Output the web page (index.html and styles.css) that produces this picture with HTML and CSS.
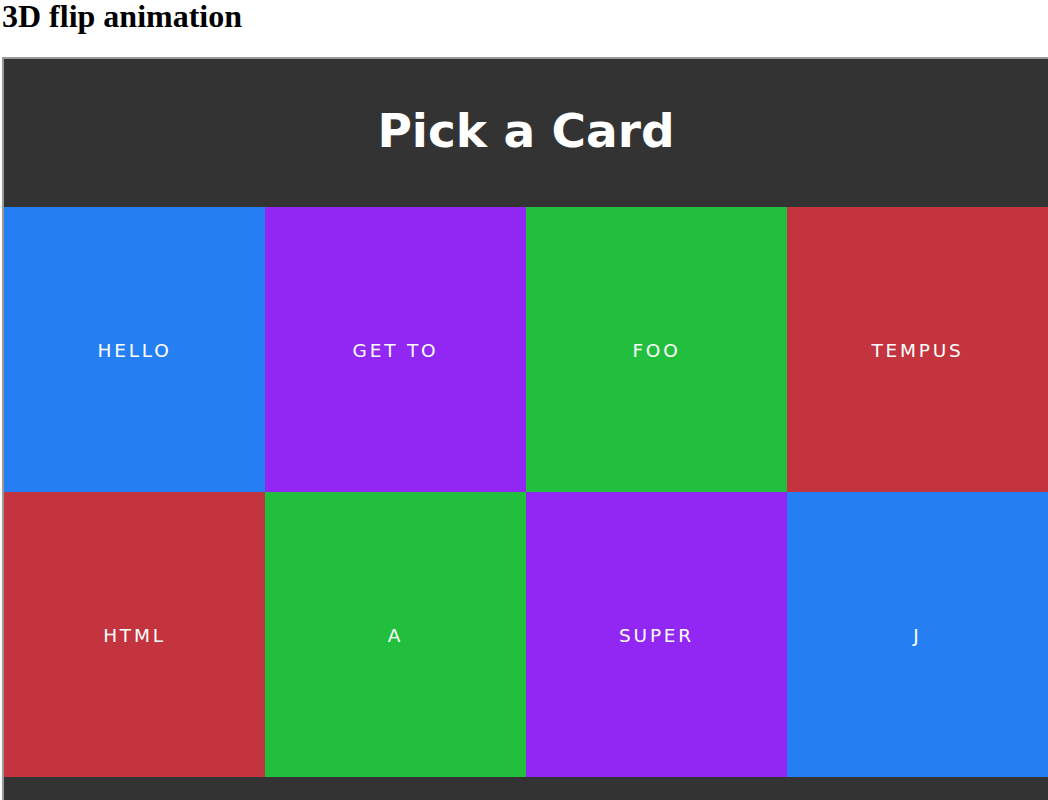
FILE: index.html
```html
<!DOCTYPE html>
<html>
<head>
<meta charset="utf-8">
<title>3D flip animation</title>
<link rel="stylesheet" href="styles.css">
</head>
<body>
<h1 class="page-title">3D flip animation</h1>
<div class="board">
  <h2 class="board-title">Pick a Card</h2>
  <div class="cards">
    <div class="card blue">Hello</div>
    <div class="card purple">Get to</div>
    <div class="card green">Foo</div>
    <div class="card red">Tempus</div>
    <div class="card red">HTML</div>
    <div class="card green">A</div>
    <div class="card purple">Super</div>
    <div class="card blue">J</div>
  </div>
</div>
</body>
</html>
```

FILE: styles.css
```css
html, body {
  margin: 0;
  padding: 0;
  background: #fff;
}
body {
  padding: 0 2px;
  font-family: "Liberation Serif", serif;
  width: 1048px;
}
.page-title {
  margin: 0 0 25px;
  font-size: 32px;
  line-height: 32px;
  font-weight: bold;
  color: #000;
}
.board {
  width: 1044px;
  border: 2px solid #999;
  background: #333;
  padding-bottom: 40px;
  font-family: "DejaVu Sans", Verdana, sans-serif;
}
.board-title {
  margin: 0;
  padding: 44px 0 49px;
  font-size: 47px;
  line-height: 55px;
  font-weight: bold;
  color: #fff;
  text-align: center;
}
.cards {
  display: grid;
  grid-template-columns: repeat(4, 261px);
  grid-auto-rows: 285px;
}
.card {
  display: flex;
  align-items: center;
  justify-content: center;
  padding-top: 2px;
  color: #fff;
  font-size: 18.5px;
  letter-spacing: 2.8px;
  text-transform: uppercase;
}
.blue { background: #267ff2; }
.purple { background: #9226f2; }
.green { background: #22bf3e; }
.red { background: #c3343e; }
```
